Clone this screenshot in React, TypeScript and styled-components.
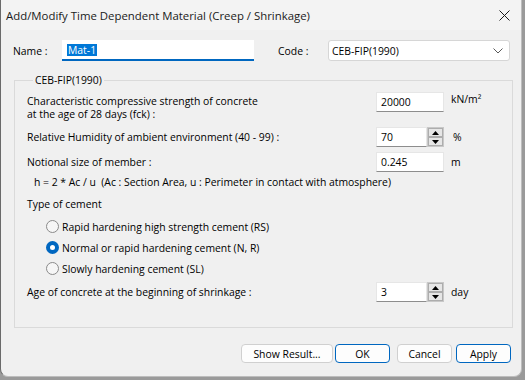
import React, { useState } from "react";
import styled, { createGlobalStyle } from "styled-components";

const FONT = `"Open Sans", "Noto Sans", "Liberation Sans", sans-serif`;

const GlobalStyle = createGlobalStyle`
    html, body {
        margin: 0;
        padding: 0;
        background: #9a9a9a;
    }
    body {
        font-family: ${FONT};
        font-size: 10.4px;
        color: #000;
    }
`;

const Window = styled.div`
    width: 522px;
    height: 377px;
    box-sizing: border-box;
    background: #f0f0f0;
    border-left: 1px solid #6a6a6a;
    border-right: 1px solid #bdbdbd;
    border-bottom: 1px solid #bdbdbd;
    border-radius: 0 0 8px 8px;
    display: flex;
    flex-direction: column;
    overflow: hidden;
`;

const TitleBar = styled.div`
    height: 30px;
    display: flex;
    align-items: center;
    justify-content: space-between;
    padding-left: 5px;
    background: #f3f3f3;
`;

const Title = styled.span`
    font-size: 11.4px;
    color: #1a1a1a;
`;

const CloseBox = styled.div`
    width: 34px;
    height: 30px;
    display: flex;
    align-items: center;
    justify-content: center;
`;

const Body = styled.div`
    flex: 1;
    display: flex;
    flex-direction: column;
    padding: 10px 9px 0 12px;
`;

const TopRow = styled.div`
    height: 21px;
    display: flex;
    align-items: center;
`;

const TopLabel = styled.span<{ $w: number }>`
    width: ${p => p.$w}px;
    flex: none;
`;

const NameBox = styled.div`
    width: 192px;
    height: 21px;
    box-sizing: border-box;
    background: #fff;
    border-bottom: 2px solid #0067c0;
    display: flex;
    align-items: center;
    padding-left: 5px;
    margin-right: 24px;
`;

const Selected = styled.span`
    background: #0078d7;
    color: #fff;
    line-height: 12px;
    padding: 0 1px;
`;

const Combo = styled.div`
    width: 182px;
    height: 21px;
    box-sizing: border-box;
    background: #fff;
    border: 1px solid #d6d6d6;
    border-radius: 3px;
    display: flex;
    align-items: center;
    justify-content: space-between;
    padding: 0 6px 0 3px;
`;

const Group = styled.fieldset`
    margin: 11px 0 0 1px;
    padding: 0 0 0 12px;
    width: 499px;
    height: 256px;
    box-sizing: border-box;
    border: 1px solid #dadada;
    min-width: 0;
    display: flex;
    flex-direction: column;
`;

const Legend = styled.legend`
    margin-left: 6px;
    padding: 0 2px;
    line-height: 16px;
`;

const Row = styled.div<{ $mt: number; $top?: boolean }>`
    display: flex;
    align-items: ${p => (p.$top ? "flex-start" : "center")};
    margin-top: ${p => p.$mt}px;
`;

const Label = styled.div<{ $pt?: number }>`
    width: 349px;
    flex: none;
    line-height: 13px;
    padding-top: ${p => p.$pt ?? 0}px;
`;

const Field = styled.div<{ $w: number }>`
    width: ${p => p.$w}px;
    height: 20px;
    box-sizing: border-box;
    background: #fff;
    border: 1px solid #e6e6e6;
    border-bottom-color: #8d8d8d;
    display: flex;
    align-items: center;
    padding-left: 4px;
    flex: none;
`;

const Spin = styled.div`
    width: 17px;
    height: 20px;
    flex: none;
    display: flex;
    flex-direction: column;
    box-sizing: border-box;
    border: 1px solid #c8c8c8;
    background: #f0f0f0;
`;

const SpinBtn = styled.div`
    flex: 1;
    display: flex;
    align-items: center;
    justify-content: center;
    border: 1px solid #adadad;
    background: #e6e6e6;
`;

const Unit = styled.span<{ $ml: number }>`
    margin-left: ${p => p.$ml}px;
`;

const Line = styled.div<{ $mt: number; $pl?: number }>`
    line-height: 13px;
    margin-top: ${p => p.$mt}px;
    padding-left: ${p => p.$pl ?? 0}px;
`;

const RadioList = styled.div`
    display: flex;
    flex-direction: column;
    margin-top: 5px;
    padding-left: 19px;
`;

const RadioRow = styled.label`
    height: 21px;
    display: flex;
    align-items: center;
    gap: 3px;
`;

const RadioDot = styled.span<{ $on: boolean }>`
    width: 13px;
    height: 13px;
    box-sizing: border-box;
    border-radius: 50%;
    flex: none;
    border: ${p => (p.$on ? "4px solid #0067c0" : "1px solid #8a8a8a")};
    background: ${p => (p.$on ? "#fff" : "#f6f6f6")};
`;

const Footer = styled.div`
    display: flex;
    justify-content: flex-end;
    margin-top: 16px;
    padding-right: 1px;
`;

const Button = styled.button<{ $w: number; $ml: number; $def?: boolean }>`
    width: ${p => p.$w}px;
    margin-left: ${p => p.$ml}px;
    height: 19px;
    box-sizing: border-box;
    padding: 0;
    font-family: ${FONT};
    font-size: 10.4px;
    color: #000;
    background: #fdfdfd;
    border: 1px solid ${p => (p.$def ? "#0067c0" : "#d0d0d0")};
    border-radius: 4px;
`;

const Up = () => (
    <svg width="7" height="4" viewBox="0 0 7 4"><path d="M0 4 L3.5 0 L7 4 Z" fill="#000" /></svg>
);
const Down = () => (
    <svg width="7" height="4" viewBox="0 0 7 4"><path d="M0 0 L3.5 4 L7 0 Z" fill="#000" /></svg>
);

function SpinField({ value }: { value: string }) {
    return (
        <>
            <Field $w={51}>{value}</Field>
            <Spin>
                <SpinBtn><Up /></SpinBtn>
                <SpinBtn><Down /></SpinBtn>
            </Spin>
        </>
    );
}

const cements = [
    "Rapid hardening high strength cement (RS)",
    "Normal or rapid hardening cement (N, R)",
    "Slowly hardening cement (SL)",
];

export default function App() {
    const [cement, setCement] = useState(1);
    return (
        <>
            <GlobalStyle />
            <Window>
                <TitleBar>
                    <Title>Add/Modify Time Dependent Material (Creep / Shrinkage)</Title>
                    <CloseBox>
                        <svg width="11" height="11" viewBox="0 0 11 11">
                            <path d="M0.5 0.5 L10.5 10.5 M10.5 0.5 L0.5 10.5" stroke="#1a1a1a" strokeWidth="1" />
                        </svg>
                    </CloseBox>
                </TitleBar>
                <Body>
                    <TopRow>
                        <TopLabel $w={49}>Name :</TopLabel>
                        <NameBox><Selected>Mat-1</Selected></NameBox>
                        <TopLabel $w={50}>Code :</TopLabel>
                        <Combo>
                            <span>CEB-FIP(1990)</span>
                            <svg width="10" height="6" viewBox="0 0 10 6">
                                <path d="M0.5 0.5 L5 5 L9.5 0.5" fill="none" stroke="#5a5a5a" strokeWidth="1" />
                            </svg>
                        </Combo>
                    </TopRow>
                    <Group>
                        <Legend>CEB-FIP(1990)</Legend>
                        <Row $mt={4} $top>
                            <Label $pt={3}>
                                Characteristic compressive strength of concrete
                                <br />
                                at the age of 28 days (fck) :
                            </Label>
                            <Field $w={68}>20000</Field>
                            <Unit $ml={7}>kN/m²</Unit>
                        </Row>
                        <Row $mt={6}>
                            <Label>Relative Humidity of ambient environment (40 - 99) :</Label>
                            <SpinField value="70" />
                            <Unit $ml={9}>%</Unit>
                        </Row>
                        <Row $mt={5}>
                            <Label>Notional size of member :</Label>
                            <Field $w={68}>0.245</Field>
                            <Unit $ml={7}>m</Unit>
                        </Row>
                        <Line $mt={4} $pl={7}>
                            h = 2 * Ac / u&nbsp;&nbsp;(Ac : Section Area, u : Perimeter in contact with atmosphere)
                        </Line>
                        <Line $mt={9}>Type of cement</Line>
                        <RadioList>
                            {cements.map((c, i) => (
                                <RadioRow key={c} onClick={() => setCement(i)}>
                                    <RadioDot $on={cement === i} />
                                    {c}
                                </RadioRow>
                            ))}
                        </RadioList>
                        <Row $mt={3}>
                            <Label>Age of concrete at the beginning of shrinkage :</Label>
                            <SpinField value="3" />
                            <Unit $ml={7}>day</Unit>
                        </Row>
                    </Group>
                    <Footer>
                        <Button $w={92} $ml={0}>Show Result...</Button>
                        <Button $w={55} $ml={2} $def>OK</Button>
                        <Button $w={55} $ml={7}>Cancel</Button>
                        <Button $w={55} $ml={4} $def>Apply</Button>
                    </Footer>
                </Body>
            </Window>
        </>
    );
}
